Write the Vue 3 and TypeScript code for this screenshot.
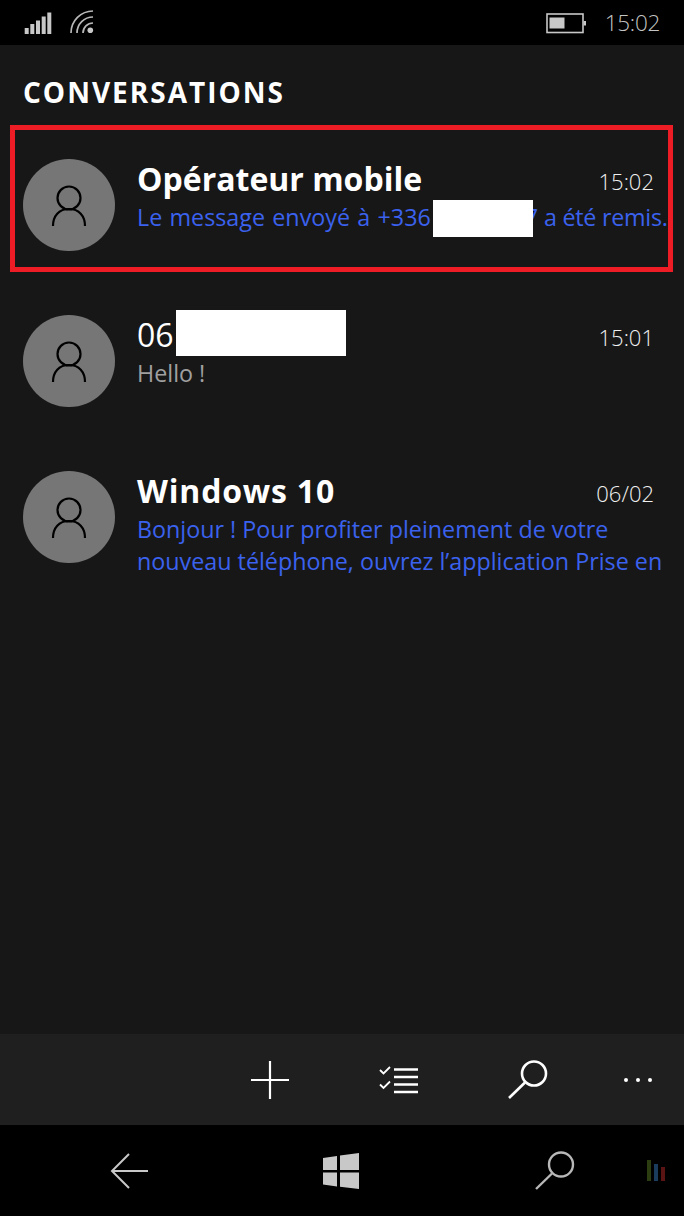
<template>
  <div class="phone">
    <header class="status-bar">
      <svg class="signal" width="28" height="22" viewBox="0 0 28 22" fill="#c8c8c8">
        <rect x="0.700" y="16" width="4" height="6" />
        <rect x="6.300" y="12" width="4" height="10" />
        <rect x="12" y="8.500" width="4" height="13.500" />
        <rect x="17.700" y="4.500" width="4" height="17.500" />
        <rect x="23.300" y="0.500" width="4" height="21.500" />
      </svg>
      <svg class="wifi" width="26" height="26" viewBox="0 0 26 26" fill="none" stroke="#b8b8b8" stroke-width="1.700">
        <path d="M2 25A22 22 0 0 1 24 3" />
        <path d="M8 25A16 16 0 0 1 24 9" />
        <path d="M14 25A10 10 0 0 1 24 15" />
        <circle cx="21.300" cy="22.300" r="2.800" fill="#c8c8c8" stroke="none" />
      </svg>
      <div class="status-right">
        <svg class="battery" width="40" height="24" viewBox="0 0 40 24" fill="none">
          <rect x="1" y="3" width="36" height="18.500" stroke="#c8c8c8" stroke-width="1.600" />
          <rect x="3.500" y="6.500" width="15" height="11" fill="#c8c8c8" />
          <rect x="37.500" y="10" width="2.500" height="4.500" fill="#c8c8c8" />
        </svg>
        <span class="clock">15:02</span>
      </div>
    </header>

    <main class="content">
      <h1 class="title">CONVERSATIONS</h1>
      <ul class="list">
        <li v-for="c in conversations" :key="c.id" class="row" :class="{ selected: c.selected }">
          <div class="avatar">
            <svg width="36" height="42" viewBox="0 0 36 42" fill="none" stroke="#000" stroke-width="2.200">
              <circle cx="18" cy="13" r="11.500" />
              <path d="M2 41C2 31 8 24 18 24S34 31 34 41" />
            </svg>
          </div>
          <div class="text">
            <div class="head">
              <span class="name" :class="{ unread: c.unread, wide: c.id === 3 }">
                {{ c.name }}<span v-if="c.nameMask" class="mask name-mask"></span>
              </span>
              <span class="time">{{ c.time }}</span>
            </div>
            <div class="message" :class="{ unread: c.unread }">
              <template v-if="c.id === 1"><span class="msg-lead">Le message envoyé à +336</span><span class="mask msg-mask"></span><span class="last-digit">7</span><span class="msg-tail"> a été remis.</span></template>
              <template v-else>
                <div v-for="line in c.lines" :key="line">{{ line }}</div>
              </template>
            </div>
          </div>
        </li>
      </ul>
    </main>

    <footer class="command-bar">
      <svg class="cmd plus" width="40" height="40" viewBox="0 0 40 40" stroke="#fff" stroke-width="2.200">
        <path d="M20 1V39M1 20H39" />
      </svg>
      <svg class="cmd select" width="40" height="34" viewBox="0 0 40 34" fill="none" stroke="#fff">
        <path d="M1 7L4.500 10.500L11 4M1 21.500L4.500 25L11 18.500" stroke-width="1.800" />
        <path d="M15 6.500H39M15 14H39M15 21.500H39M15 29H39" stroke-width="2.600" />
      </svg>
      <svg class="cmd search" width="40" height="40" viewBox="0 0 40 40" fill="none" stroke="#fff" stroke-width="2.600">
        <circle cx="26" cy="13.500" r="12" />
        <path d="M17 22.500L1 38" />
      </svg>
      <div class="cmd dots"><i></i><i></i><i></i></div>
    </footer>

    <nav class="nav-bar">
      <svg class="back" width="38" height="36" viewBox="0 0 38 36" fill="none" stroke="#c8c8c8" stroke-width="2">
        <path d="M19 1L2 18L19 35M2 18H38" />
      </svg>
      <svg class="windows" width="36" height="36" viewBox="0 0 36 36" fill="#c8c8c8">
        <path d="M0 5L14 3V17H0ZM17 2.500L36 0V17H17ZM0 19.500H14V33.500L0 31.500ZM17 19.500H36V36L17 33.800Z" />
      </svg>
      <svg class="nav-search" width="40" height="40" viewBox="0 0 40 40" fill="none" stroke="#b8b8b8" stroke-width="2.400">
        <circle cx="26" cy="13.500" r="12" />
        <path d="M17 22.500L1 38" />
      </svg>
      <svg class="bars" width="18" height="21" viewBox="0 0 18 21">
        <rect x="0" y="0" width="4" height="21" fill="#2c3d12" />
        <rect x="7" y="4" width="4" height="17" fill="#1b3c5c" />
        <rect x="14" y="7" width="4" height="14" fill="#5a1414" />
      </svg>
    </nav>
  </div>
</template>

<script setup lang="ts">
interface Conversation {
  id: number
  name: string
  time: string
  unread: boolean
  selected?: boolean
  nameMask?: boolean
  lines: string[]
}

const conversations: Conversation[] = [
  { id: 1, name: 'Opérateur mobile', time: '15:02', unread: true, selected: true, lines: [] },
  { id: 2, name: '06', time: '15:01', unread: false, nameMask: true, lines: ['Hello !'] },
  {
    id: 3,
    name: 'Windows 10',
    time: '06/02',
    unread: true,
    lines: ['Bonjour ! Pour profiter pleinement de votre', 'nouveau téléphone, ouvrez l’application Prise en']
  }
]
</script>

<style scoped>
.phone {
  width: 684px;
  height: 1216px;
  display: flex;
  flex-direction: column;
  overflow: hidden;
  background: #171717;
  font-family: "Open Sans", "Noto Sans", sans-serif;
  color: #fff;
}

.status-bar {
  height: 45px;
  flex: none;
  background: #000;
  display: flex;
  align-items: center;
  padding: 0 24px;
}

.signal {
  margin-right: 17px;
}

.wifi {
  margin-top: -4px;
}

.status-right {
  margin-left: auto;
  display: flex;
  align-items: center;
  gap: 19px;
}

.clock {
  font-size: 22.500px;
  font-weight: 300;
  letter-spacing: -0.3px;
  color: #c4c4c4;
}

.content {
  flex: 1;
  min-height: 0;
}

.title {
  margin: 30px 0 0 23px;
  font-size: 28px;
  line-height: 34px;
  font-weight: 700;
  letter-spacing: 2px;
}

.list {
  list-style: none;
  margin: 50px 0 0;
  padding: 0;
}

.row {
  position: relative;
  height: 156px;
  display: flex;
  gap: 22.500px;
  padding-left: 23px;
}

.row.selected::after {
  content: "";
  position: absolute;
  left: 10px;
  top: -34px;
  width: 663px;
  height: 147px;
  box-sizing: border-box;
  border: 5px solid #ee1c25;
}

.avatar {
  width: 91.500px;
  height: 92px;
  flex: none;
  border-radius: 50%;
  background: #767676;
  display: flex;
  align-items: center;
  justify-content: center;
}

.avatar svg {
  margin-top: 2px;
}

.text {
  flex: 1;
  min-width: 0;
  padding-top: 1px;
  padding-right: 30px;
}

.head {
  display: flex;
  justify-content: space-between;
  align-items: flex-start;
  height: 38px;
}

.name {
  position: relative;
  font-size: 32px;
  line-height: 38px;
}

.name.unread {
  font-weight: 700;
}

.name.wide {
  letter-spacing: 0.800px;
}

.time {
  margin-top: 6px;
  font-size: 22px;
  line-height: 30px;
  font-weight: 300;
  color: #f0f0f0;
}

.message {
  font-size: 23.300px;
  line-height: 32px;
  font-weight: 400;
  color: #a0a0a0;
  white-space: nowrap;
  margin-top: 3px;
}

.message.unread {
  color: #3b62ee;
}

.msg-lead {
  word-spacing: 1.200px;
}

.msg-tail {
  letter-spacing: -0.250px;
}

.mask {
  display: inline-block;
  background: #fff;
}

.name-mask {
  position: absolute;
  left: 39px;
  top: -6px;
  width: 170px;
  height: 46px;
}

.msg-mask {
  position: relative;
  z-index: 1;
  width: 100px;
  height: 37px;
  margin: -10px 0 0 2px;
  vertical-align: -11px;
}

.last-digit {
  margin-left: -8px;
}

.command-bar {
  height: 91px;
  flex: none;
  background: #1f1f1f;
  display: flex;
  align-items: center;
  padding-left: 250px;
  gap: 89px;
}

.dots {
  display: flex;
  gap: 8px;
  margin-left: -13px;
}

.dots i {
  width: 4px;
  height: 4px;
  border-radius: 50%;
  background: #fff;
}

.nav-bar {
  height: 91px;
  flex: none;
  background: #000;
  display: flex;
  align-items: center;
  padding-left: 110px;
}

.windows {
  margin-left: 175px;
}

.nav-search {
  margin-left: 176px;
}

.bars {
  margin-left: 72px;
}
</style>
